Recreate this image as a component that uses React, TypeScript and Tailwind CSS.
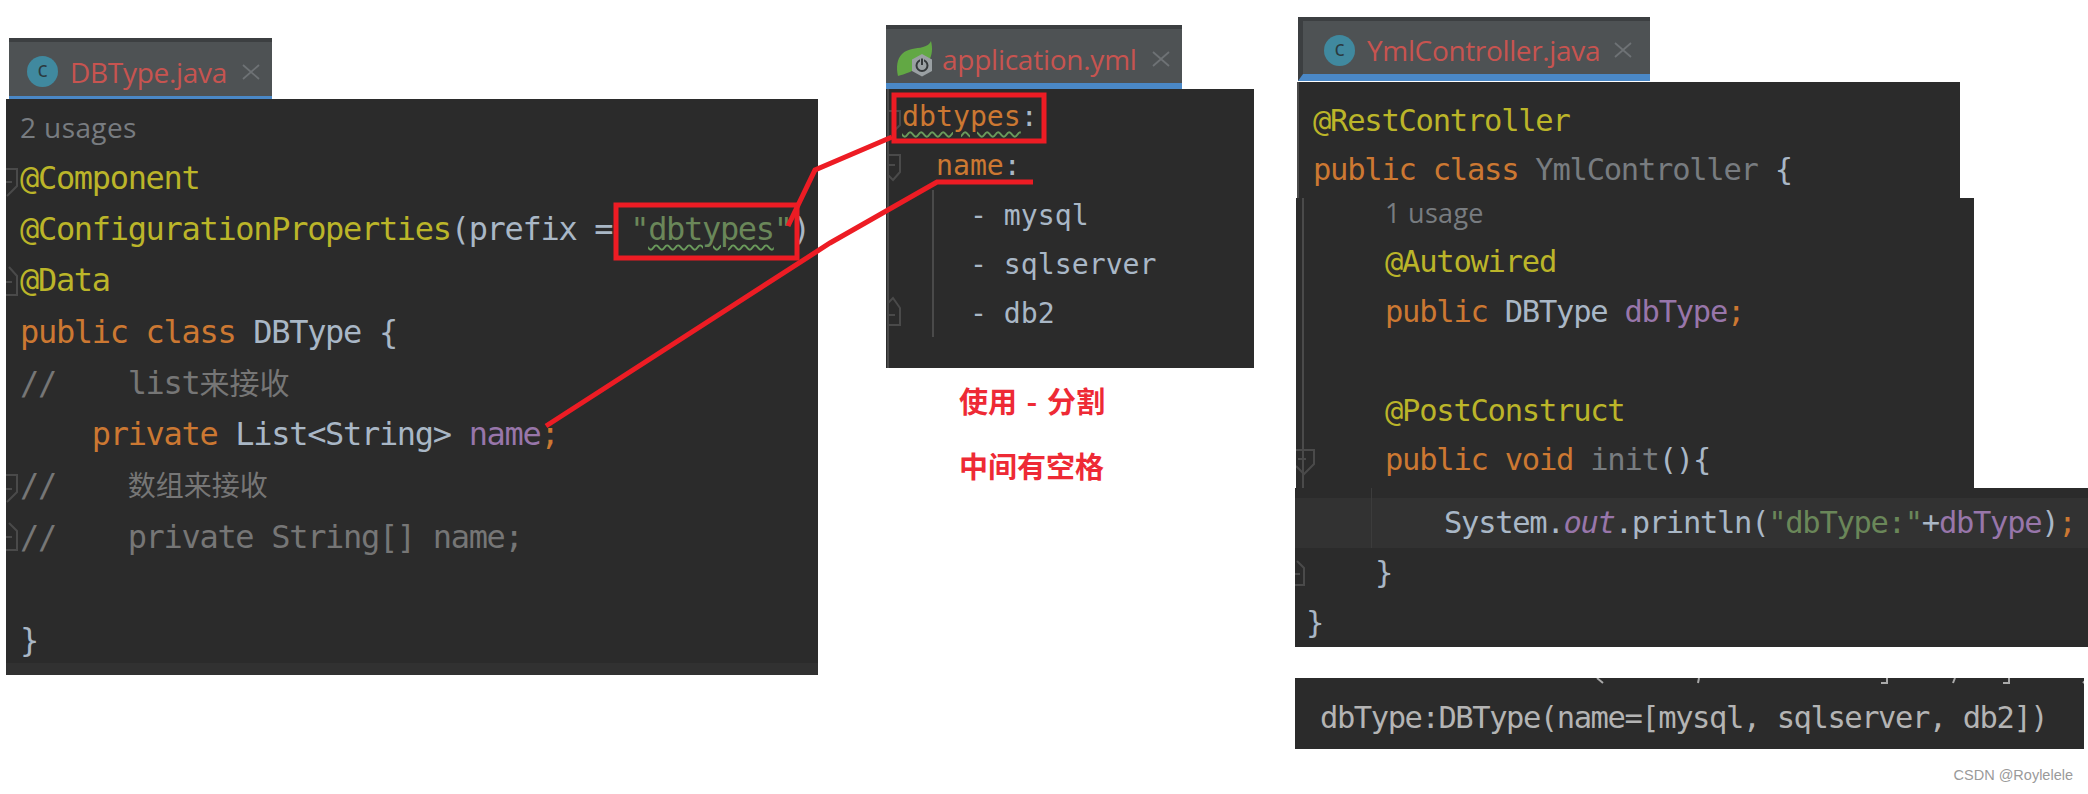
const mono = "font-['DejaVu_Sans_Mono','Noto_Sans_CJK_SC',monospace] whitespace-pre";

const kw = 'text-[#cc7832]';
const ann = 'text-[#bbb529]';
const txt = 'text-[#a9b7c6]';
const str = 'text-[#6a8759]';
const cmt = 'text-[#767676]';
const fld = 'text-[#9876aa]';
const dim = 'text-[#787c80]';

function ClassIcon() {
  return (
    <span className="flex h-[31px] w-[31px] shrink-0 items-center justify-center rounded-full bg-[#40899f] pb-[3px] font-['Open_Sans',sans-serif] text-[21px] text-[#2b3a40]">
      c
    </span>
  );
}

function CloseIcon() {
  return (
    <svg width="18" height="16" viewBox="0 0 18 16" className="shrink-0">
      <path d="M1 1L17 15M17 1L1 15" stroke="#6e7275" strokeWidth="1.8" fill="none" />
    </svg>
  );
}

function SpringIcon() {
  return (
    <svg width="37" height="36" viewBox="0 0 37 36" className="shrink-0">
      <path d="M2 35C0 26 1 18 6 13C12 7 20 8 27 6C31 5 34 3 35 0C37 8 36 14 33 20L14 31C9 33 5 34 2 35Z" fill="#62a844" />
      <path d="M26 13L36 18.500V30L26 35.500L16 30V18.500Z" fill="#9aa0a3" />
      <circle cx="26" cy="24.500" r="5.500" fill="none" stroke="#34383a" strokeWidth="2" />
      <path d="M26 17V24" stroke="#9aa0a3" strokeWidth="4" />
      <path d="M26 17.500V24" stroke="#34383a" strokeWidth="2" />
    </svg>
  );
}

export default function App() {
  return (
    <div className="relative flex h-[794px] w-[2088px] items-start overflow-hidden bg-white">
      {/* DBType.java */}
      <div className="ml-[6px] mt-[38px] w-[812px] shrink-0">
        <div className="ml-[3px] flex h-[61px] w-[263px] items-center border-t-[4px] border-b-[3px] border-t-[#3c3f41] border-b-[#4a88c7] bg-[#4e5254] pl-[18px] pt-[5px]">
          <ClassIcon />
          <span className="ml-[12px] font-['Open_Sans',sans-serif] text-[28px] tracking-[-0.3px] text-[#c75450]">DBType.java</span>
          <span className="ml-[15px]"><CloseIcon /></span>
        </div>
        <div className={`relative h-[576px] bg-[#2b2b2b] pl-[14px] pt-[3px] text-[32px] leading-[51.15px] tracking-[-1.32px] ${mono}`}>
          <svg className="absolute inset-0 h-full w-full" fill="none" stroke="#4a4a4a" strokeWidth="2">
            <path d="M0 70H11V87L1 97M0 83H6" />
            <path d="M0 196H11V177L3 168M0 183H6" />
            <path d="M0 376H11V393L1 403M0 390H6" />
            <path d="M0 451H11V432L3 424M0 438H6" />
          </svg>
          <div className="absolute bottom-0 left-0 right-0 h-[12px] bg-[#313131]"></div>
          <div className="relative">
            <div className={`${dim} font-['Open_Sans',sans-serif] text-[28px] tracking-[0.4px]`}>2 usages</div>
            <div className={ann}>@Component</div>
            <div className={ann}>@ConfigurationProperties<span className={txt}>(prefix = </span><span className={str}>"<span className="underline decoration-[#6a9a5b] decoration-wavy decoration-[1.5px] underline-offset-[4px]">dbtypes</span>"</span><span className={txt}>)</span></div>
            <div className={ann}>@Data</div>
            <div className={kw}>public class <span className={txt}>DBType {'{'}</span></div>
            <div className={cmt}>//    list<span className="tracking-normal text-[30px]">来接收</span></div>
            <div className={kw}>    private <span className={txt}>List&lt;String&gt; </span><span className={fld}>name</span>;</div>
            <div className={cmt}>//    <span className="tracking-normal text-[28px]">数组来接收</span></div>
            <div className={cmt}>//    private String[] name;</div>
            <div>&nbsp;</div>
            <div className={txt}>{'}'}</div>
          </div>
        </div>
      </div>

      {/* application.yml */}
      <div className="ml-[68px] mt-[25px] w-[368px] shrink-0">
        <div className="flex h-[64px] w-[296px] items-center border-t-[4px] border-b-[6px] border-t-[#3c3f41] border-b-[#4a88c7] bg-[#4e5254] pl-[10px] pt-[6px]">
          <SpringIcon />
          <span className="ml-[9px] font-['Open_Sans',sans-serif] text-[28px] tracking-[-0.25px] text-[#c75450]">application.yml</span>
          <span className="ml-[15px]"><CloseIcon /></span>
        </div>
        <div className={`relative h-[279px] bg-[#2b2b2b] pl-[16px] pt-[3px] text-[28.2px] leading-[49.3px] ${mono}`}>
          <svg className="absolute inset-0 h-full w-full" fill="none" stroke="#4a4a4a" strokeWidth="2">
            <path d="M2 0V279" />
            <path d="M2 22H14V36L7 43" />
            <path d="M2 66H14V83L7 91L2 86M2 76H9" />
            <path d="M2 236H14V219L7 209L2 214M2 226H9" />
            <path d="M47 101V248" />
          </svg>
          <div className="relative">
            <div className={kw}><span className="underline decoration-[#6a9a5b] decoration-wavy decoration-[1.5px] underline-offset-[5px]">dbtypes</span><span className={txt}>:</span></div>
            <div className={kw}>  name<span className={txt}>:</span></div>
            <div className={txt}>    - mysql</div>
            <div className={txt}>    - sqlserver</div>
            <div className={txt}>    - db2</div>
          </div>
        </div>
        <div className="ml-[73px] font-['Noto_Sans_CJK_SC',sans-serif] text-[29px] font-bold leading-[65px] text-[#ee2a35] [word-spacing:3px]">
          <div>使用 - 分割</div>
          <div>中间有空格</div>
        </div>
      </div>

      {/* YmlController.java */}
      <div className="ml-[41px] mt-[17px] w-[793px] shrink-0">
        <div className="ml-[3px] flex h-[64px] w-[352px] items-center border-l-[5px] border-t-[4px] border-b-[7px] border-l-[#3c3f41] border-t-[#3c3f41] border-b-[#4a88c7] bg-[#4e5254] pl-[21px] pt-[5px]">
          <ClassIcon />
          <span className="ml-[12px] font-['Open_Sans',sans-serif] text-[28px] tracking-[-0.35px] text-[#c75450]">YmlController.java</span>
          <span className="ml-[14px]"><CloseIcon /></span>
        </div>
        <div className={`ml-[2px] mt-[1px] h-[116px] w-[663px] border-l-[2px] border-l-[#4a4a4a] bg-[#2b2b2b] pl-[14px] pt-[14px] text-[30.5px] leading-[49.2px] tracking-[-1.26px] ${mono}`}>
          <div className={ann}>@RestController</div>
          <div className={kw}>public class <span className={dim}>YmlController </span><span className={txt}>{'{'}</span></div>
        </div>
        <div className={`relative ml-[1px] h-[290px] w-[678px] bg-[#2b2b2b] pl-[89px] text-[30.5px] leading-[49.4px] tracking-[-1.26px] [display:flow-root] ${mono}`}>
          <svg className="absolute inset-0 h-full w-full" fill="none" stroke="#4a4a4a" strokeWidth="2">
            <path d="M7 0V290" />
            <path d="M0 252H18V266L8 276L0 268M2 261H10" />
          </svg>
          <div className="relative -mt-[10px]">
            <div className={`${dim} font-['Open_Sans',sans-serif] text-[27px] tracking-[0.3px]`}>1 usage</div>
            <div className={ann}>@Autowired</div>
            <div className={kw}>public <span className={txt}>DBType </span><span className={fld}>dbType</span>;</div>
            <div>&nbsp;</div>
            <div className={ann}>@PostConstruct</div>
            <div className={kw}>public void <span className={dim}>init</span><span className={txt}>(){'{'}</span></div>
          </div>
        </div>
        <div className={`h-[159px] bg-[#2b2b2b] pt-[10px] text-[30.5px] leading-[49.5px] tracking-[-1.3px] ${mono}`}>
          <div className="relative flex h-[50px] items-center bg-[#323232] pl-[149px]">
            <div className="absolute bottom-0 left-[76px] top-[-10px] w-[1px] bg-[#3c3c3c]"></div>
            <div className={txt}>System.<span className={`${fld} italic`}>out</span>.println(<span className={str}>"dbType:"</span>+<span className={fld}>dbType</span>)<span className={kw}>;</span></div>
          </div>
          <div className="relative pl-[80px]">
            <svg className="absolute left-0 top-[12px]" width="12" height="26" fill="none" stroke="#4a4a4a" strokeWidth="2">
              <path d="M0 25H9V8L2 1M0 14H5" />
            </svg>
            <div className={txt}>{'}'}</div>
          </div>
          <div className={`pl-[11px] ${txt}`}>{'}'}</div>
        </div>
        <div className={`mt-[31px] h-[71px] w-[789px] bg-[#2b2b2b] text-[30.5px] leading-[49px] tracking-[-1.45px] text-[#b4b4b4] ${mono}`}>
          <svg className="block" width="789" height="6" fill="none" stroke="#a9a9a9" strokeWidth="2">
            <path d="M302 0L308 5M404 0L403 5M592 0V5H586M660 0L658 5M714 0V5H708M793 0L788 5" />
          </svg>
          <div className="mt-[9px] pl-[25px]">dbType:DBType(name=[mysql, sqlserver, db2])</div>
        </div>
        <div className="mt-[16px] pr-[15px] text-right font-['Liberation_Sans',sans-serif] text-[14.500px] text-[#9a9a9a]">CSDN @Roylelele</div>
      </div>

      {/* red annotations */}
      <svg className="pointer-events-none absolute inset-0 h-full w-full" fill="none" stroke="#ed1c24">
        <rect x="616" y="205" width="181" height="53" strokeWidth="5" />
        <rect x="894" y="95" width="150" height="46" strokeWidth="5" />
        <path d="M788 226L815 170L892 137" strokeWidth="5" />
        <path d="M546 426L830 243L937 182H1033" strokeWidth="5" />
      </svg>
    </div>
  );
}
